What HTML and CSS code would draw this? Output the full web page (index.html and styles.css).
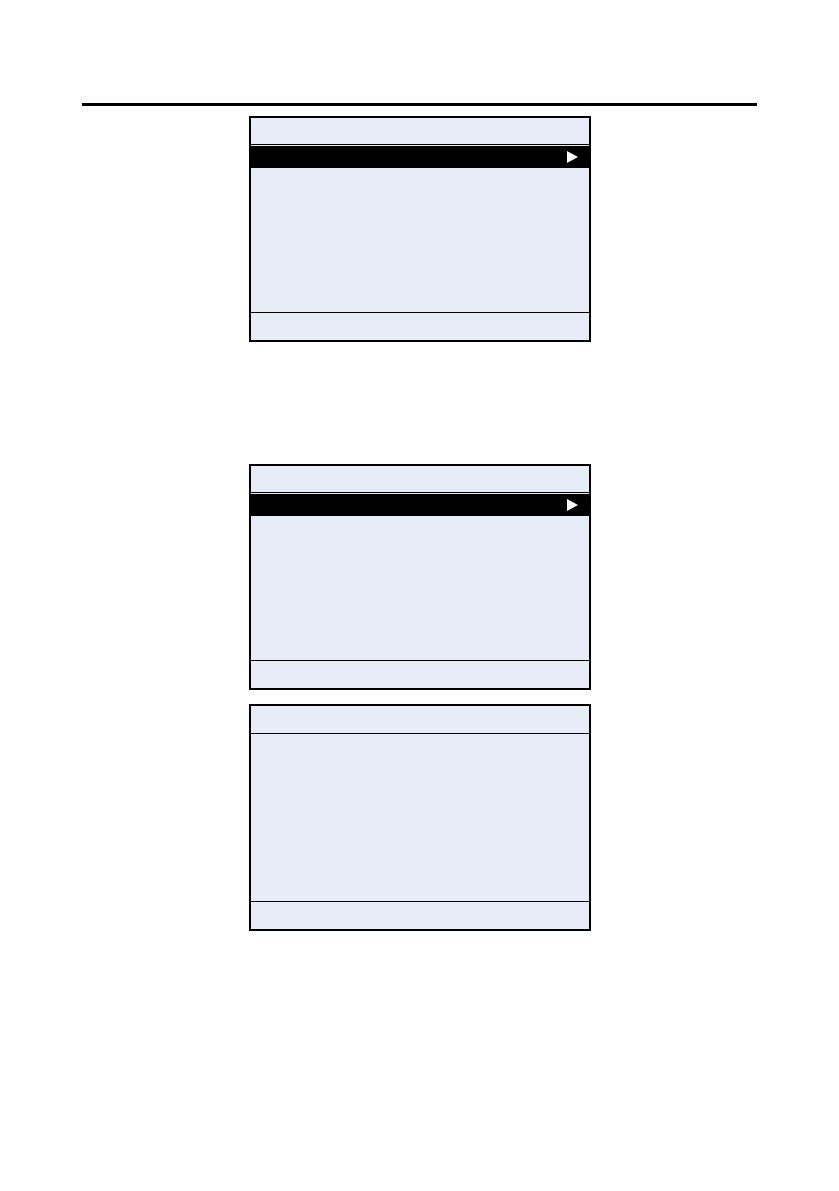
FILE: index.html
```html
<!DOCTYPE html>
<html>
<head>
<meta charset="utf-8">
<link rel="stylesheet" href="styles.css">
</head>
<body>
<div class="page">
  <div class="rule"></div>

  <div class="screen first">
    <div class="scr-head"></div>
    <div class="scr-sel">
      <svg class="arrow" width="11" height="12" viewBox="0 0 11 12"><polygon points="0,0 11,6 0,12" fill="#fff"/></svg>
    </div>
    <div class="scr-body"></div>
    <div class="scr-foot"></div>
  </div>

  <div class="screen second">
    <div class="scr-head"></div>
    <div class="scr-sel">
      <svg class="arrow" width="11" height="12" viewBox="0 0 11 12"><polygon points="0,0 11,6 0,12" fill="#fff"/></svg>
    </div>
    <div class="scr-body"></div>
    <div class="scr-foot"></div>
  </div>

  <div class="screen third">
    <div class="scr-head plain"></div>
    <div class="scr-body tall"></div>
    <div class="scr-foot"></div>
  </div>
</div>
</body>
</html>
```

FILE: styles.css
```css
html, body {
  margin: 0;
  padding: 0;
  background: #ffffff;
  font-family: "Liberation Sans", Arial, sans-serif;
}

.page {
  width: 839px;
  min-height: 1191px;
  display: flex;
  flex-direction: column;
  align-items: center;
  padding-top: 103px;
  box-sizing: border-box;
}

.rule {
  width: 675px;
  height: 3px;
  background: #000;
}

.screen {
  width: 342px;
  box-sizing: border-box;
  border: 2px solid #000;
  background: #e8ecf6;
  display: flex;
  flex-direction: column;
}

.first { margin-top: 10px; }
.second { margin-top: 122px; }
.third { margin-top: 14px; }

.scr-head {
  height: 27px;
  border-bottom: 1px solid #000;
  box-sizing: border-box;
}

.scr-head.plain {
  height: 28px;
}

.scr-sel {
  margin-top: 1px;
  height: 22px;
  background: #000;
  display: flex;
  align-items: center;
  justify-content: flex-end;
  padding-right: 11px;
}

.arrow {
  display: block;
}

.scr-body {
  height: 144px;
}

.scr-body.tall {
  height: 167px;
}

.scr-foot {
  height: 28px;
  border-top: 1px solid #000;
  box-sizing: border-box;
}
```
